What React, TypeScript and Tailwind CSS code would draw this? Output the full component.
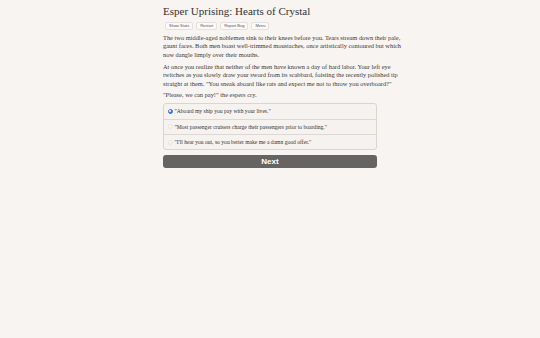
import { useState } from 'react';

const choices = [
  '"Aboard my ship you pay with your lives."',
  '"Most passenger cruisers charge their passengers prior to boarding."',
  '"I\'ll hear you out, so you better make me a damn good offer."',
];

export default function App() {
  const [selected, setSelected] = useState(0);

  return (
    <div className="min-h-[338px] w-full bg-[#f7f4f1] text-[#3a3a3a] font-['Liberation_Serif',serif]">
      <div className="mx-auto w-[214px] pt-[5px]">
        <h1 className="text-[11px] leading-[13px] text-[#333] whitespace-nowrap">Esper Uprising: Hearts of Crystal</h1>

        <div className="mt-[4px] flex gap-[3px] pl-[2px]">
          {['Show Stats', 'Restart', 'Report Bug', 'Menu'].map((b) => (
            <button
              key={b}
              className="h-[8px] rounded-[2px] border border-[#e4e0dc] bg-[#fbfaf8] px-[3px] [font-family:'Liberation_Sans',Arial,sans-serif] text-[4px] leading-[6px] text-[#555]"
            >
              {b}
            </button>
          ))}
        </div>

        <div className="mt-[3.5px] text-[6.4px] leading-[8.5px] whitespace-nowrap">
          <p>
            The two middle-aged noblemen sink to their knees before you. Tears stream down their pale,<br />
            gaunt faces. Both men boast well-trimmed moustaches, once artistically contoured but which<br />
            now dangle limply over their mouths.
          </p>
          <p className="mt-[3.5px]">
            At once you realize that neither of the men have known a day of hard labor. Your left eye<br />
            twitches as you slowly draw your sword from its scabbard, foisting the recently polished tip<br />
            straight at them. "You sneak aboard like rats and expect me not to throw you overboard?"
          </p>
          <p className="mt-[2.5px]">"Please, we can pay!" the espers cry.</p>
        </div>

        <div className="mt-[3.5px] rounded-[3px] border border-[#d9d5d1] bg-[#f5f2ef]">
          {choices.map((c, i) => (
            <label
              key={c}
              className={`flex h-[15.3px] items-center gap-[2px] px-[3.5px] text-[5.6px] text-[#333] whitespace-nowrap ${i > 0 ? 'border-t border-[#dcd8d4]' : ''}`}
              onClick={() => setSelected(i)}
            >
              <span
                className={`flex h-[5px] w-[5px] items-center justify-center rounded-full border ${selected === i ? 'border-[#3b7ad9] bg-[#3b7ad9]' : 'border-[#e6e3e0] bg-[#f8f6f4]'}`}
              >
                {selected === i && <span className="h-[2px] w-[2px] rounded-full bg-white" />}
              </span>
              <span>{c}</span>
            </label>
          ))}
        </div>

        <button className="mt-[5px] flex h-[13px] w-full items-center justify-center rounded-[3px] bg-[#666462] [font-family:'Liberation_Sans',Arial,sans-serif] text-[8px] font-bold text-white">
          Next
        </button>
      </div>
    </div>
  );
}
